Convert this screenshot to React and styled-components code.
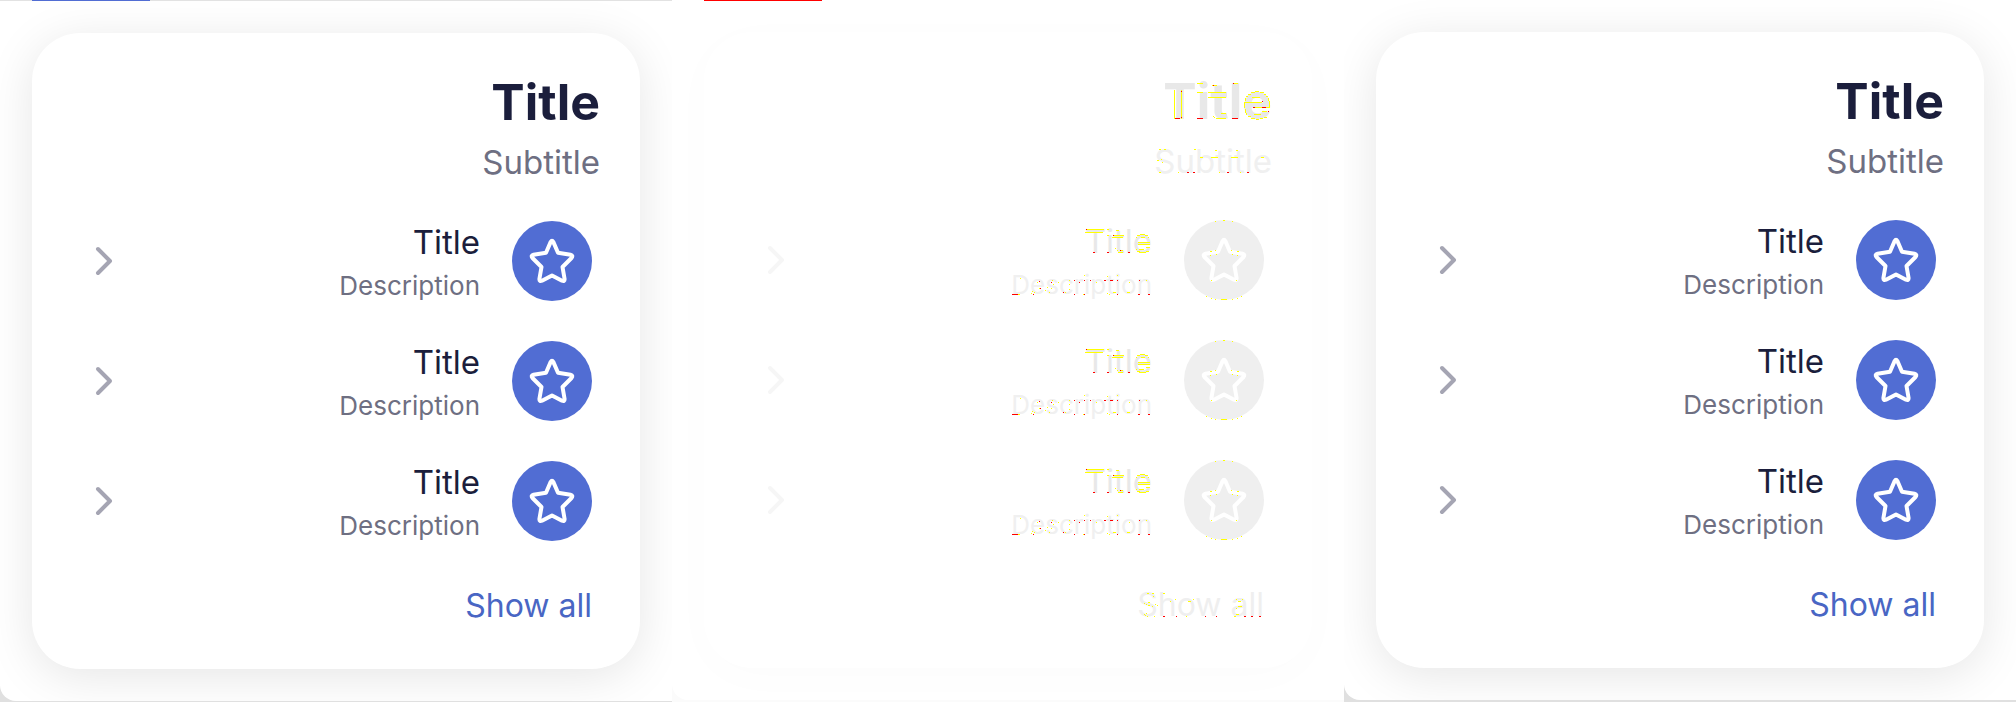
import React from "react";
import styled, { createGlobalStyle } from "styled-components";

const Global = createGlobalStyle`
  * { box-sizing: border-box; }
  body { margin: 0; background: #fff; font-family: Inter, "Liberation Sans", sans-serif; }
  h2, h3, p, ul { margin: 0; padding: 0; font-weight: 400; }
`;

const live = {
  tab: "#516dd3", rule: "#e2e2e2", backdrop: "#e0e0e0",
  shadow: "0 8px 48px rgba(0, 0, 0, 0.1)",
  heading: "#1b1e3c", title: "#1b1e3c", muted: "#6e6f82",
  disc: "#516dd3", chevron: "#a5a5b3", link: "#4966c4",
};
const diff = {
  tab: "#ff0000", rule: "transparent", backdrop: "#fbfbfb",
  shadow: "0 8px 48px rgba(0, 0, 0, 0.015)",
  heading: "#e8e8e8", title: "#e8e8e8", muted: "#f0f0f0",
  disc: "#efefef", chevron: "#f6f6f6", link: "#efefef",
};

// Changed pixels as [x, y, width = 1, height = 1]; red changed, yellow is anti-aliasing.
const marks = {
  header: {
    width: 122, height: 113, top: 2,
    yellow: [
      [24, 20, 1, 29], [31, 20, 1, 29], [47, 13, 6], [47, 22, 6], [62, 15, 5], [58, 22, 18], [58, 27, 18],
      [66, 48, 10], [71, 43, 5], [63, 46], [64, 47], [83, 13, 5],
      [105, 21, 4], [101, 22, 4], [110, 22, 4], [98, 24, 3], [114, 24, 2], [96, 26, 2], [116, 26, 2],
      [95, 28, 1, 3], [118, 28, 1, 3], [94, 32, 18], [94, 32, 1, 6], [119, 31, 1, 7], [103, 37, 17],
      [95, 39, 1, 4], [96, 43, 1, 2], [98, 46, 3], [101, 48, 4], [110, 48, 3], [114, 47, 3], [106, 49, 3],
      [104, 44, 7], [102, 27, 8], [112, 41, 5],
      [9, 79, 2], [14, 79, 2], [44, 79, 2], [65, 80, 2], [86, 80, 2], [50, 87, 3], [61, 87, 7], [81, 87, 7],
      [111, 87, 3], [7, 90, 2], [11, 89], [12, 92], [9, 102, 2], [28, 102], [69, 102], [90, 102],
    ],
    red: [
      [25, 48, 5], [31, 21], [31, 47], [47, 48, 6], [63, 15], [82, 48, 6], [83, 13], [112, 31], [103, 37, 2],
      [112, 37, 4], [118, 41], [37, 102, 2], [43, 102, 2], [77, 102, 2], [97, 102, 2],
    ],
  },
  item: {
    width: 147, height: 90, top: 0,
    yellow: [
      [81, 14, 18], [80, 17, 18], [102, 14, 2], [102, 20, 2], [111, 15, 3], [109, 20, 10], [107, 22, 11],
      [110, 33], [112, 35], [113, 37, 5], [116, 35, 2], [135, 19, 5], [132, 20, 3], [140, 20, 3], [136, 22, 4],
      [131, 22], [143, 22], [133, 27, 12], [133, 29, 12], [141, 32, 4], [131, 34], [134, 34, 5], [134, 37, 7],
      [132, 36, 3], [141, 36, 3],
      [13, 79, 2], [15, 63], [26, 78], [27, 76], [29, 77], [32, 67], [34, 73], [42, 72], [40, 75], [47, 65],
      [48, 69], [46, 73], [44, 77], [53, 67], [64, 69], [60, 77], [64, 74], [64, 65], [79, 60], [91, 67],
      [78, 79], [102, 61], [112, 60], [102, 78], [104, 79], [108, 77, 3], [124, 67], [122, 77, 3], [141, 65],
    ],
    red: [
      [81, 14], [88, 37, 2], [102, 37, 2], [123, 37, 2], [108, 20], [115, 35],
      [7, 79, 6], [28, 79], [34, 66], [35, 73], [46, 67], [58, 77], [69, 65], [69, 79], [74, 67], [79, 65],
      [79, 79], [85, 65], [99, 65, 2], [105, 65, 3], [112, 65], [112, 79], [134, 65], [133, 79, 2], [143, 79, 2],
    ],
  },
  disc: {
    width: 80, height: 80, top: 0,
    yellow: [
      [31, 1], [39, 0, 2], [48, 1], [26, 31, 2], [31, 30], [47, 30], [53, 31, 2], [26, 35], [32, 34], [48, 34],
      [53, 35], [27, 60], [52, 60], [22, 76], [27, 78], [31, 79], [37, 79, 6], [48, 79], [53, 78], [57, 76],
    ],
    red: [],
  },
  link: {
    width: 134, height: 50, top: 0,
    yellow: [
      [17, 13, 2], [22, 13, 2], [33, 13, 2], [23, 16], [14, 23], [16, 24], [18, 22, 2], [18, 25, 2], [22, 26],
      [25, 24], [27, 25], [14, 34], [16, 33], [15, 35], [17, 36], [24, 36], [40, 21], [45, 19], [58, 21, 3],
      [63, 19], [56, 36], [106, 19], [108, 21, 3], [112, 19], [108, 26, 4], [106, 28], [106, 34, 3], [104, 36, 2],
    ],
    red: [[33, 36, 2], [46, 36], [75, 36], [86, 36], [114, 36, 2], [121, 36, 2], [129, 36, 2]],
  },
};

const Board = styled.main`
  display: grid;
  grid-template-columns: repeat(3, minmax(0, 1fr));
`;
const Frame = styled.section`
  position: relative;
  display: flex;
  flex-direction: column;
  background: ${(p) => p.$c.backdrop};
`;
const TabBar = styled.div`
  position: relative;
  z-index: 1;
  height: 1px;
  margin-bottom: ${(p) => (p.$overlap ? -1 : 0)}px;
  padding-left: 32px;
  background: ${(p) => p.$c.rule};
`;
const TabMark = styled.div`
  width: 118px;
  height: 1px;
  background: ${(p) => p.$c.tab};
`;
const Screen = styled.div`
  padding: 32px;
  background: #fff;
  border-bottom-left-radius: 16px;
  overflow: hidden;
  margin-bottom: ${(p) => p.$edge}px;
`;
const Card = styled.article`
  display: flex;
  flex-direction: column;
  padding: 40px 40px 38px;
  border-radius: 48px;
  background: #fff;
  box-shadow: ${(p) => p.$c.shadow};
  text-align: right;
`;
const Header = styled.header`
  position: relative;
`;
const Heading = styled.h2`
  font-size: 50px;
  line-height: 58px;
  font-weight: 700;
  color: ${(p) => p.$c.heading};
`;
const Subtitle = styled.p`
  padding-top: 8px;
  font-size: 33px;
  line-height: 46px;
  color: ${(p) => p.$c.muted};
`;
const List = styled.ul`
  display: flex;
  flex-direction: column;
  gap: 40px;
  padding: 36px 8px 0;
  list-style: none;
`;
const Item = styled.li`
  display: flex;
`;
const ItemButton = styled.button`
  display: flex;
  flex: 1;
  align-items: center;
  justify-content: space-between;
  height: 80px;
  padding: 0;
  border: 0;
  background: none;
  font: inherit;
  text-align: right;
  cursor: pointer;
`;
const ItemBody = styled.span`
  display: flex;
  align-items: center;
  gap: 32px;
`;
const ItemText = styled.span`
  position: relative;
  display: flex;
  flex-direction: column;
  gap: 2px;
  padding-top: 4px;
`;
const ItemTitle = styled.span`
  font-size: 33px;
  line-height: 44px;
  color: ${(p) => p.$c.title};
`;
const ItemDescription = styled.span`
  font-size: 26px;
  line-height: 40px;
  color: ${(p) => p.$c.muted};
`;
const Disc = styled.span`
  position: relative;
  display: grid;
  place-items: center;
  width: 80px;
  height: 80px;
  border-radius: 50%;
  background: ${(p) => p.$c.disc};
`;
const Footer = styled.div`
  display: flex;
  justify-content: flex-end;
  padding: 40px 8px 0;
`;
const ShowAll = styled.a`
  position: relative;
  font-size: 32px;
  line-height: 50px;
  color: ${(p) => p.$c.link};
  text-decoration: none;
`;
const MarkLayer = styled.svg`
  position: absolute;
  top: 0;
  right: 0;
  pointer-events: none;
`;

const rects = (list, fill) =>
  list.map(([x, y, w = 1, h = 1]) => (
    <rect key={`${x}-${y}-${w}-${h}`} x={x} y={y} width={w} height={h} fill={fill} />
  ));

const Marks = ({ of: m }) => (
  <MarkLayer width={m.width} height={m.height} viewBox={`0 ${m.top} ${m.width} ${m.height}`} aria-hidden="true">
    {rects(m.yellow, "#ffff00")}
    {rects(m.red, "#ff0000")}
  </MarkLayer>
);

const Star = () => (
  <svg width="48" height="48" viewBox="0 0 48 48" fill="none" aria-hidden="true">
    <path d="M22.7 4.9 Q24 2.5 25.3 4.9 L30 15.8 L42.5 17.8 Q45.5 18.5 43.5 21 L34.5 30 L36.6 42 Q36.7 44.8 34 43.7 L24 38.5 L14 43.7 Q11.3 44.8 11.4 42 L13.5 30 L4.5 21 Q2.5 18.5 5.5 17.8 L18 15.8 Z" stroke="#fff" strokeWidth="4" strokeLinejoin="round" />
  </svg>
);
const Chevron = ({ color }) => (
  <svg width="48" height="48" viewBox="0 0 48 48" fill="none" aria-hidden="true">
    <path d="M18 12 L30 24 L18 36" stroke={color} strokeWidth="4" strokeLinecap="round" strokeLinejoin="round" />
  </svg>
);

function Panel({ colors: c, tabs, overlap, marked, edge }) {
  return (
    <Frame $c={c}>
      {tabs && <TabBar $c={c} $overlap={overlap}><TabMark $c={c} /></TabBar>}
      <Screen $edge={edge}>
        <Card $c={c}>
          <Header>
            <Heading $c={c}>Title</Heading>
            <Subtitle $c={c}>Subtitle</Subtitle>
            {marked && <Marks of={marks.header} />}
          </Header>
          <List>
            {[0, 1, 2].map((i) => (
              <Item key={i}>
                <ItemButton type="button">
                  <Chevron color={c.chevron} />
                  <ItemBody>
                    <ItemText>
                      <ItemTitle $c={c}>Title</ItemTitle>
                      <ItemDescription $c={c}>Description</ItemDescription>
                      {marked && <Marks of={marks.item} />}
                    </ItemText>
                    <Disc $c={c}>
                      <Star />
                      {marked && <Marks of={marks.disc} />}
                    </Disc>
                  </ItemBody>
                </ItemButton>
              </Item>
            ))}
          </List>
          <Footer>
            <ShowAll $c={c} href="#all">
              Show all
              {marked && <Marks of={marks.link} />}
            </ShowAll>
          </Footer>
        </Card>
      </Screen>
    </Frame>
  );
}

export default function App() {
  return (
    <>
      <Global />
      <Board>
        <Panel colors={live} tabs edge={1} />
        <Panel colors={diff} tabs overlap marked edge={2} />
        <Panel colors={live} edge={2} />
      </Board>
    </>
  );
}
